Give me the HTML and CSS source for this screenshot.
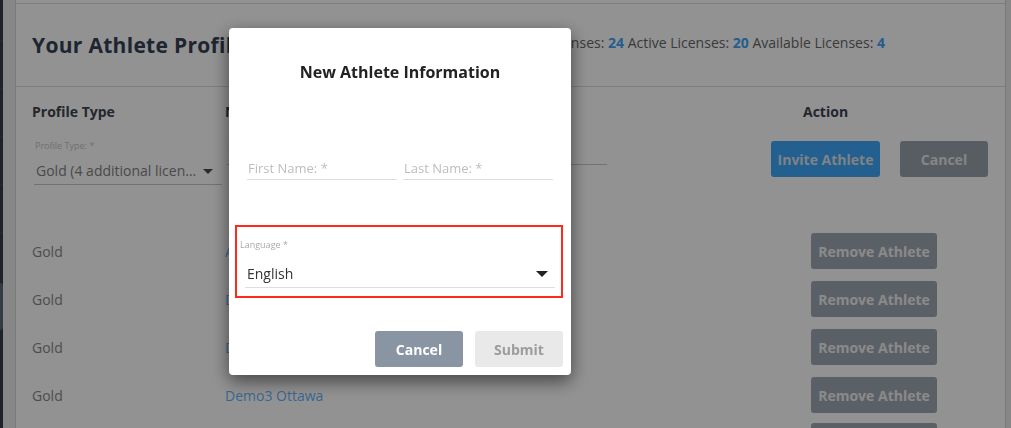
FILE: index.html
```html
<!DOCTYPE html>
<html lang="en">
<head>
<meta charset="utf-8">
<title>Athlete Profiles</title>
<link rel="stylesheet" href="styles.css">
</head>
<body>
<div class="app">
  <nav class="sidebar">
    <div class="nav-item"></div>
    <div class="nav-item"></div>
    <div class="nav-item"></div>
    <div class="nav-item"></div>
    <div class="nav-item"></div>
    <div class="nav-item active"></div>
  </nav>
  <main class="main">
    <section class="card">
      <div class="card-top"></div>
      <header class="card-head">
        <h1 class="title">Your Athlete Profiles</h1>
        <div class="licenses">Total Licenses: <b>24</b> Active Licenses: <b>20</b> Available Licenses: <b>4</b></div>
      </header>
      <div class="row head-row">
        <div class="col c1">Profile Type</div>
        <div class="col c2">Name</div>
        <div class="col c3"><span class="action-h">Action</span></div>
      </div>
      <div class="row filter-row">
        <div class="col c1">
          <div class="field pt-field">
            <div class="small-label">Profile Type: *</div>
            <div class="select"><span>Gold (4 additional licen...</span><span class="caret"></span></div>
          </div>
        </div>
        <div class="col c2">
          <div class="field name-field">
            <div class="small-label">Name: *</div>
            <div class="select"><span></span></div>
          </div>
        </div>
        <div class="col c3 btns">
          <button class="btn btn-blue">Invite Athlete</button>
          <button class="btn btn-grey">Cancel</button>
        </div>
      </div>
      <div class="row body-row">
        <div class="col c1">Gold</div>
        <div class="col c2"><a class="link">Adam Ottawa</a></div>
        <div class="col c3"><button class="btn btn-remove">Remove Athlete</button></div>
      </div>
      <div class="row body-row">
        <div class="col c1">Gold</div>
        <div class="col c2"><a class="link">Demo1 Ottawa</a></div>
        <div class="col c3"><button class="btn btn-remove">Remove Athlete</button></div>
      </div>
      <div class="row body-row">
        <div class="col c1">Gold</div>
        <div class="col c2"><a class="link">Demo2 Ottawa</a></div>
        <div class="col c3"><button class="btn btn-remove">Remove Athlete</button></div>
      </div>
      <div class="row body-row">
        <div class="col c1">Gold</div>
        <div class="col c2"><a class="link">Demo3 Ottawa</a></div>
        <div class="col c3"><button class="btn btn-remove">Remove Athlete</button></div>
      </div>
      <div class="row body-row">
        <div class="col c1"></div>
        <div class="col c2"></div>
        <div class="col c3"><button class="btn btn-remove" aria-label="Remove Athlete"></button></div>
      </div>
    </section>
  </main>
</div>

<div class="backdrop">
  <div class="modal">
    <h2 class="modal-title">New Athlete Information</h2>
    <div class="name-row">
      <div class="input">First Name: *</div>
      <div class="input">Last Name: *</div>
    </div>
    <div class="lang-box">
      <div class="lang-label">Language *</div>
      <div class="lang-select"><span>English</span><span class="caret dark"></span></div>
    </div>
    <div class="modal-actions">
      <button class="mbtn mbtn-cancel">Cancel</button>
      <button class="mbtn mbtn-submit" disabled>Submit</button>
    </div>
  </div>
</div>
</body>
</html>
```
FILE: styles.css
```css
* { box-sizing: border-box; }
html, body { margin: 0; padding: 0; }
body {
  font-family: "Open Sans", "Liberation Sans", sans-serif;
  background: #ececec;
  width: 1011px;
  height: 428px;
  overflow: hidden;
}
.app { display: flex; height: 428px; }

.sidebar {
  width: 3px;
  background: #343d48;
  display: flex;
  flex-direction: column;
}
.nav-item {
  height: 48px;
  border-bottom: 1px solid #3f4855;
  flex: none;
}
.nav-item:first-child { height: 41px; }
.nav-item.active {
  margin-top: 50px;
  height: 47px;
  background: #5f6a77;
  border-bottom: none;
  border-radius: 0 6px 6px 0;
}

.main { flex: 1; padding: 0 5px 0 12px; }
.card {
  background: #fff;
  border-left: 1px solid #d5d5d5;
  border-right: 1px solid #d5d5d5;
  height: 100%;
  overflow: hidden;
}
.card-top { height: 4px; border-bottom: 1px solid #dcdcdc; }
.card-head {
  height: 83px;
  border-bottom: 1px solid #dcdcdc;
  display: flex;
  align-items: center;
  justify-content: space-between;
  padding: 0 120px 0 16px;
}
.title {
  margin: 0;
  font-size: 21px;
  font-weight: 700;
  color: #364254;
  letter-spacing: 0.3px;
}
.licenses { font-size: 14px; color: #666; margin-top: -6px; }
.licenses b { color: #3ca4f8; font-weight: 700; }

.row { display: flex; padding-left: 16px; }
.col { flex: none; }
.c1 { width: 193px; }
.c2 { width: 546px; }
.c3 { flex: 1; }

.head-row { height: 48px; align-items: center; font-size: 14px; font-weight: 700; color: #3d4450; }
.action-h { margin-left: 32px; }

.filter-row { height: 92px; padding-top: 5px; }
.field { border-bottom: 1px solid #c8c8c8; }
.pt-field { margin-left: 2px; width: 188px; }
.name-field { margin-left: 2px; width: 380px; }
.small-label { font-size: 9px; line-height: 12px; color: #c4c4c4; padding-left: 1px; }
.select {
  display: flex;
  justify-content: space-between;
  align-items: center;
  font-size: 14px;
  line-height: 20px;
  padding: 9px 9px 3px 2px;
  color: #818181;
}
.caret {
  width: 0; height: 0;
  border-left: 5px solid transparent;
  border-right: 5px solid transparent;
  border-top: 5px solid #4a4a4a;
}
.caret.dark { border-top-color: #222; border-left-width: 6px; border-right-width: 6px; border-top-width: 6px; }

.btns { display: flex; gap: 20px; padding-top: 1px; align-items: flex-start; }
.btn {
  font-family: inherit;
  font-size: 14px;
  font-weight: 700;
  border: none;
  border-radius: 3px;
  height: 36px;
  padding: 0;
  color: #fff;
}
.btn-blue { background: #3da7fa; width: 109px; color: #dfe4ea; }
.btn-grey { background: #9aa3ad; width: 88px; color: #e8e8e8; }
.btn-remove { background: #9ea8b3; width: 126px; height: 36px; margin-left: 40px; color: #f2f2f2; }

.body-row { height: 48px; align-items: center; font-size: 14px; color: #878787; }
.link { color: #66b4fa; }

.backdrop {
  position: fixed;
  inset: 0;
  background: rgba(0, 0, 0, 0.427);
}
.modal {
  position: absolute;
  left: 229px;
  top: 28px;
  width: 342px;
  height: 347px;
  background: #fff;
  border-radius: 4px;
  box-shadow: 0 6px 18px rgba(0, 0, 0, 0.55);
  padding: 0 8px 8px;
  display: flex;
  flex-direction: column;
}
.modal-title {
  margin: 32px 0 0;
  text-align: center;
  font-size: 16px;
  line-height: 24px;
  font-weight: 700;
  color: #222;
}
.name-row { display: flex; gap: 6px; margin: 73px 10px 0; }
.input {
  flex: 1;
  font-size: 13px;
  line-height: 22px;
  color: #bdbdbd;
  border-bottom: 1px solid #dedede;
  padding-left: 1px;
}
.lang-box {
  margin: 45px 0 0 -2px;
  height: 73px;
  border: 2px solid #ff2a1c;
  padding: 12px 0 0 3px;
}
.lang-label { font-size: 9px; line-height: 12px; color: #aaa; }
.lang-select {
  margin: 0 6px 0 5px;
  padding: 13px 7px 3px 2px;
  font-size: 14px;
  line-height: 20px;
  color: #333;
  display: flex;
  align-items: center;
  justify-content: space-between;
  border-bottom: 1px solid #dedede;
}
.modal-actions { display: flex; justify-content: flex-end; gap: 12px; margin-top: 33px; }
.mbtn {
  font-family: inherit;
  font-size: 14px;
  font-weight: 700;
  width: 88px;
  height: 36px;
  border: none;
  border-radius: 3px;
  padding: 0;
}
.mbtn-cancel { background: #8a95a3; color: #fff; }
.mbtn-submit { background: #e9e9e9; color: #9c9c9c; }
```
